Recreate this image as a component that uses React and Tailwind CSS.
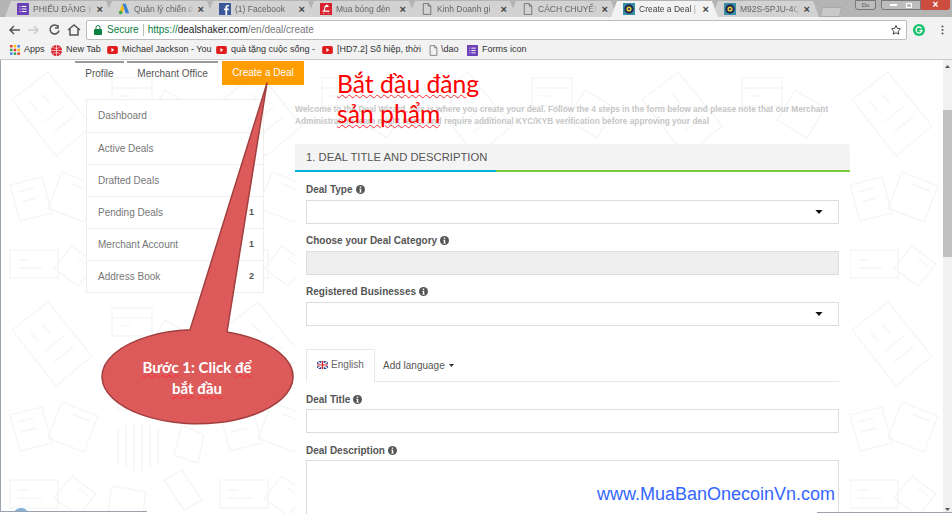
import React from 'react';

const tabs = [
  { label: 'PHIẾU ĐĂNG K', icon: 'forms' },
  { label: 'Quản lý chiến d', icon: 'ads' },
  { label: '(1) Facebook', icon: 'fb' },
  { label: 'Mua bóng đèn', icon: 'shop' },
  { label: 'Kinh Doanh gi', icon: 'doc' },
  { label: 'CÁCH CHUYỂN', icon: 'doc' },
  { label: 'Create a Deal |', icon: 'deal', active: true },
  { label: 'M92S-5PJU-4Q', icon: 'deal' },
];

const sideItems = [
  { label: 'Dashboard' },
  { label: 'Active Deals' },
  { label: 'Drafted Deals' },
  { label: 'Pending Deals', count: 1 },
  { label: 'Merchant Account', count: 1 },
  { label: 'Address Book', count: 2 },
];

const TabIcon = ({ type }) => {
  if (type === 'forms') return (
    <svg width="12" height="12" viewBox="0 0 14 14"><rect width="14" height="14" rx="1" fill="#6b3fb5" /><path d="M3 4h1M3 7h1M3 10h1M5.500 4H11M5.500 7H11M5.500 10H11" stroke="#fff" strokeWidth="1.200" /></svg>
  );
  if (type === 'ads') return (
    <svg width="12" height="12" viewBox="0 0 14 14"><path d="M5 1h4l4 11H9z" fill="#3b82d6" /><path d="M5 1 1 12h4l2-6z" fill="#f2bc1a" /><circle cx="3" cy="11" r="2" fill="#34a853" /></svg>
  );
  if (type === 'fb') return (
    <svg width="12" height="12" viewBox="0 0 14 14"><rect width="14" height="14" fill="#3b5998" /><path d="M9.500 14V8.500h1.700l.3-2H9.500V5.200c0-.6.2-1 1-1h1V2.400c-.3 0-.9-.1-1.500-.1C8.600 2.300 7.500 3.200 7.500 4.900v1.600H6v2h1.500V14z" fill="#fff" /></svg>
  );
  if (type === 'shop') return (
    <svg width="12" height="12" viewBox="0 0 14 14"><rect width="14" height="14" fill="#d8232f" /><path d="M3 9.500h8M4 12h1M9 12h1M5 9l1-5h3M7 2l3 2" stroke="#fff" strokeWidth="1.300" fill="none" /></svg>
  );
  if (type === 'deal') return (
    <svg width="12" height="12" viewBox="0 0 14 14"><rect width="14" height="14" fill="#3a8fa8" /><circle cx="7" cy="7" r="5.500" fill="#23264f" /><circle cx="7" cy="7" r="3" fill="#e4cf3a" /><circle cx="7" cy="7" r="1.300" fill="#23264f" /></svg>
  );
  return (
    <svg width="10" height="12" viewBox="0 0 12 14" fill="none" stroke="#666" strokeWidth="1"><path d="M1.500.5h6l3 3v10h-9zM7.500.500v3h3" /></svg>
  );
};

const YouTubeIcon = () => (
  <svg width="11" height="8" viewBox="0 0 12 9" className="shrink-0"><rect width="12" height="9" rx="2" fill="#e01b1b" /><path d="M4.800 2.300 8 4.500 4.800 6.700z" fill="#fff" /></svg>
);

const InfoIcon = () => (
  <svg width="9" height="9" viewBox="0 0 10 10" className="ml-[3px] inline-block"><circle cx="5" cy="5" r="5" fill="#555" /><rect x="4.200" y="1.700" width="1.600" height="1.500" fill="#fff" /><path d="M3.500 4.200h2.300v3.200h.8v.9H3.500v-.9h.8V5.100h-.8z" fill="#fff" /></svg>
);

const Caret = () => (
  <svg width="8" height="4" viewBox="0 0 9 5"><path d="M0 0h9L4.500 5z" fill="#111" /></svg>
);

const FieldLabel = ({ children, className = '' }) => (
  <div className={`flex items-center h-[12px] text-[10px] font-bold text-[#555] ${className}`}>
    {children}
    <InfoIcon />
  </div>
);

const SelectBox = ({ disabled }) => (
  <div className={`mt-[5px] h-[24px] border border-[#ddd] flex items-center justify-end pr-[15px] ${disabled ? 'bg-[#eeeeee]' : 'bg-white'}`}>
    {!disabled && <Caret />}
  </div>
);

// faint line drawings behind the page
const PagePattern = () => (
  <svg className="absolute inset-0 w-full h-full" xmlns="http://www.w3.org/2000/svg">
    <defs>
      <pattern id="doodle" width="210" height="230" patternUnits="userSpaceOnUse">
        <g fill="none" stroke="#f6f6f6" strokeWidth="1.500">
          <path d="M12 40 48 12 92 66 56 96z" />
          <path d="M30 42l8 9M42 34l8 9M44 62l20-16M54 72l20-16" />
          <path d="M112 18h40v28h-40zM112 28h40M120 36h10" />
          <path d="M165 30l30 18-18 30-30-18z" />
          <path d="M10 125l32-8 10 36-32 8zM18 132l16-4M21 142l16-4" />
          <path d="M62 112l36 14-14 36-36-14zM72 124l18 7" />
          <path d="M118 90h52v30h-52z" />
          <circle cx="144" cy="105" r="9" />
          <path d="M125 97h3M160 113h3" />
          <path d="M118 138v38M126 136v42M134 134v46M142 134v46M150 136v42M158 138v38" />
          <path d="M182 135l22 10-6 28-24-8z" />
          <path d="M10 190h48v28H10zM18 200h10M18 208h24" />
          <path d="M72 186l24 18-18 22-24-18zM78 198l10 8" />
          <path d="M112 196l34 6-4 24-34-6z" />
          <path d="M164 190l18-10 20 30-18 10z" />
        </g>
      </pattern>
    </defs>
    <rect width="100%" height="100%" fill="url(#doodle)" />
  </svg>
);

const Callout = () => (
  <svg className="absolute left-0 top-0" width="320" height="430" viewBox="0 0 320 430">
    <path d="M267 23 227 272A95.500 47 0 1 1 190 269.850Z" fill="#dc5a5a" stroke="#a23f3f" strokeWidth="1.500" strokeLinejoin="round" />
  </svg>
);

const Squiggle = ({ children }) => (
  <span className="underline decoration-wavy decoration-red-500 decoration-1">{children}</span>
);

export default function App() {
  return (
    <div className="relative w-[952px] h-[514px] overflow-hidden bg-white font-['Liberation_Sans',sans-serif]">
      {/* tab strip */}
      <div className="h-[17px] bg-[#b4b4b4] flex items-end pl-[5px] text-[8.500px] text-[#666]">
        {tabs.map((tab, idx) => (
          <div
            key={idx}
            className={`relative w-[107px] -mr-[6px] h-[16px] flex items-center pl-[12px] pr-[9px] [clip-path:polygon(6px_0,calc(100%-6px)_0,100%_100%,0_100%)] ${tab.active ? 'bg-[#f2f2f2] z-10 text-[#444]' : 'bg-[#d2d2d2]'}`}
          >
            <span className="w-[12px] flex justify-center"><TabIcon type={tab.icon} /></span>
            <span className="ml-[4px] mr-[5px] flex-1 overflow-hidden whitespace-nowrap [mask-image:linear-gradient(to_right,black_88%,transparent)]">{tab.label}</span>
            <span className="text-[#444] text-[11px] font-bold leading-none">×</span>
          </div>
        ))}
        <div className="ml-[8px] w-[20px] h-[10px] bg-[#c9c9c9] border border-[#a8a8a8] -skew-x-12" />
        <div className="ml-auto flex self-start h-[10px]">
          <div className="w-[21px] h-[10px] mr-[5px] rounded-b-[3px] border border-[#777] bg-[#bdbdbd] text-[6px] text-center leading-[8px] text-[#555]">Du</div>
          <div className="w-[40px] rounded-bl-[3px] border border-[#777] bg-[#bdbdbd] flex items-center justify-center gap-[9px]">
            <div className="w-[7px] h-[2px] bg-white" />
            <div className="w-[6px] h-[5px] border border-white" />
          </div>
          <div className="w-[29px] rounded-br-[3px] bg-[#cc4d3f] text-white text-[10px] font-bold text-center leading-[9px] mr-[2px]">×</div>
        </div>
      </div>

      {/* address bar */}
      <div className="h-[24px] bg-[#f2f2f2] flex items-center pt-[1px]">
        <svg width="74" height="14" viewBox="0 0 74 14" className="ml-[8px]" fill="none" strokeWidth="1.500">
          <path d="M12 7H2M6 3 2 7l4 4" stroke="#555" />
          <path d="M36 7H26M32 3l4 4-4 4" stroke="#ccc" transform="translate(-6 0)" />
          <path d="M58 3.500a4.500 4.500 0 1 0 1 4" stroke="#555" transform="translate(-8 0)" />
          <path d="M58 2v3h-3" stroke="#555" transform="translate(-8 0)" />
          <path d="M66 7l6-5 6 5M68 6v6h8V6" stroke="#555" transform="translate(-6 0)" />
        </svg>
        <div className="ml-[4px] w-[821px] h-[20px] bg-white border border-[#bcbcbc] rounded-[2px] flex items-center pl-[7px] text-[10px] whitespace-nowrap">
          <svg width="8" height="10" viewBox="0 0 8 10"><path d="M2 4V2.500a2 2 0 0 1 4 0V4" fill="none" stroke="#0b8043" /><rect y="4" width="8" height="6" rx="1" fill="#0b8043" /></svg>
          <span className="ml-[5px] text-[#0b8043]">Secure</span>
          <span className="mx-[4px] w-px h-[12px] bg-[#bbb]" />
          <span className="text-[#0b8043]">https://</span>
          <span className="text-[#222]">dealshaker.com</span>
          <span className="text-[#777]">/en/deal/create</span>
          <svg width="12" height="12" viewBox="0 0 24 24" fill="none" stroke="#444" strokeWidth="2" className="ml-auto mr-[4px]"><path d="m12 3 2.800 5.800 6.200.9-4.500 4.400 1 6.300-5.500-3-5.500 3 1-6.300L3 9.700l6.200-.9z" /></svg>
        </div>
        <svg width="12" height="12" viewBox="0 0 12 12" className="ml-[6px]"><circle cx="6" cy="6" r="6" fill="#15c26b" /><path d="M8.500 4.300A3 3 0 1 0 9 6.500H6.500" fill="none" stroke="#fff" strokeWidth="1.300" /></svg>
        <svg width="3" height="10" viewBox="0 0 3 10" className="ml-[16px]"><circle cx="1.500" cy="1.500" r="1" fill="#555" /><circle cx="1.500" cy="5" r="1" fill="#555" /><circle cx="1.500" cy="8.500" r="1" fill="#555" /></svg>
      </div>

      {/* bookmarks bar */}
      <div className="h-[19px] bg-[#f2f2f2] border-b border-[#ccc] flex items-center pl-[10px] text-[9px] text-[#333] whitespace-nowrap">
        <svg width="10" height="10" viewBox="0 0 10 10" className="shrink-0">
          <rect width="2.500" height="2.500" fill="#e53935" /><rect x="3.700" width="2.500" height="2.500" fill="#fbbc05" /><rect x="7.400" width="2.500" height="2.500" fill="#4285f4" />
          <rect y="3.700" width="2.500" height="2.500" fill="#34a853" /><rect x="3.700" y="3.700" width="2.500" height="2.500" fill="#e53935" /><rect x="7.400" y="3.700" width="2.500" height="2.500" fill="#fbbc05" />
          <rect y="7.400" width="2.500" height="2.500" fill="#4285f4" /><rect x="3.700" y="7.400" width="2.500" height="2.500" fill="#34a853" /><rect x="7.400" y="7.400" width="2.500" height="2.500" fill="#e53935" />
        </svg>
        <span className="ml-[4px] w-[27px]">Apps</span>
        <svg width="11" height="11" viewBox="0 0 12 12" className="shrink-0"><circle cx="6" cy="6" r="6" fill="#d8232f" /><path d="M0 6h12M6 0v12M2 2.500c2.500 1.500 5.500 1.500 8 0M2 9.500c2.500-1.500 5.500-1.500 8 0" stroke="#fff" strokeWidth=".7" fill="none" /></svg>
        <span className="ml-[4px] w-[41px]">New Tab</span>
        <YouTubeIcon />
        <span className="ml-[4px] w-[94px]">Michael Jackson - You</span>
        <YouTubeIcon />
        <span className="ml-[4px] w-[91px]">quà tặng cuộc sống -</span>
        <YouTubeIcon />
        <span className="ml-[4px] w-[92px]">[HD7.2] Số hiệp, thời</span>
        <svg width="9" height="11" viewBox="0 0 12 14" fill="none" stroke="#666" strokeWidth="1" className="shrink-0"><path d="M1.500.5h6l3 3v10h-9zM7.500.500v3h3" /></svg>
        <span className="ml-[3px] w-[26px]">\dao</span>
        <svg width="11" height="11" viewBox="0 0 14 14" className="shrink-0"><rect width="14" height="14" rx="1" fill="#6b3fb5" /><path d="M3 4h1M3 7h1M3 10h1M5.500 4H11M5.500 7H11M5.500 10H11" stroke="#fff" strokeWidth="1.200" /></svg>
        <span className="ml-[4px]">Forms icon</span>
      </div>

      {/* page */}
      <div className="relative h-[454px] flex">
        <PagePattern />
        <div className="relative w-[943px] flex border-l border-[#9aa3ab]">
          {/* left column */}
          <div className="w-[294px] shrink-0">
            <div className="flex items-start pl-[74px] pt-[1px] text-[10px] text-[#555]">
              <div className="w-[49px] shrink-0 h-[24px] border-t-2 border-[#999] text-center leading-[22px]">Profile</div>
              <div className="ml-[3px] w-[91px] shrink-0 h-[24px] border-t-2 border-[#999] text-center leading-[22px]">Merchant Office</div>
              <div className="ml-[4px] w-[82px] shrink-0 h-[24px] bg-[#ff9c00] text-white text-center leading-[24px]">Create a Deal</div>
            </div>
            <div className="ml-[85px] mt-[14px] w-[178px] border border-[#eee] bg-white">
              {sideItems.map((item, idx) => (
                <div key={idx} className={`h-[32px] flex items-center justify-between pl-[11px] pr-[9px] text-[10px] text-[#777] ${idx ? 'border-t border-[#f0f0f0]' : 'pb-[2px]'}`}>
                  <span>{item.label}</span>
                  {item.count && <span className="font-bold text-[#555] text-[9px]">{item.count}</span>}
                </div>
              ))}
            </div>
          </div>

          {/* form column */}
          <div className="w-[555px] pt-[43px]">
            <p className="text-[8.300px] leading-[12px] font-bold text-[#c6c6c6] w-[540px] h-[24px]">
              Welcome to the Deal Wizard, this is where you create your deal. Follow the 4 steps in the form below and please note that our Merchant Administration team might reject and require additional KYC/KYB verification before approving your deal
            </p>
            <div className="mt-[17px] h-[26px] bg-[#f4f4f4] rounded-t-[2px] pl-[11px] flex items-center text-[11.250px] text-[#555]">
              1. DEAL TITLE AND DESCRIPTION
            </div>
            <div className="h-[2px] flex">
              <div className="w-[201px] bg-[#00b4d8]" />
              <div className="flex-1 bg-[#77cc3a]" />
            </div>
            <div className="bg-white px-[11px] pt-[11px] h-[342px]">
              <FieldLabel>Deal Type</FieldLabel>
              <SelectBox />
              <FieldLabel className="mt-[10px]">Choose your Deal Category</FieldLabel>
              <SelectBox disabled />
              <FieldLabel className="mt-[10px]">Registered Businesses</FieldLabel>
              <SelectBox />

              <div className="mt-[23px] h-[33px] border-b border-[#e8e8e8] flex text-[10px] text-[#555]">
                <div className="w-[69px] h-[33px] border border-b-0 border-[#e8e8e8] bg-white flex items-center justify-center gap-[3px] text-[#666] pb-[3px]">
                  <svg width="11" height="8" viewBox="0 0 11 8"><rect width="11" height="8" fill="#2b3f87" /><path d="M0 0l11 8M11 0 0 8" stroke="#fff" strokeWidth="1.200" /><path d="M5.500 0v8M0 4h11" stroke="#fff" strokeWidth="2.400" /><path d="M5.500 0v8M0 4h11" stroke="#d8232f" strokeWidth="1.200" /></svg>
                  English
                </div>
                <div className="ml-[8px] flex items-center">
                  Add language
                  <svg width="5" height="3" viewBox="0 0 5 3" className="ml-[4px]"><path d="M0 0h5L2.500 3z" fill="#333" /></svg>
                </div>
              </div>

              <FieldLabel className="mt-[11px]">Deal Title</FieldLabel>
              <div className="mt-[4px] h-[24px] border border-[#ddd]" />
              <FieldLabel className="mt-[11px]">Deal Description</FieldLabel>
              <div className="mt-[4px] h-[60px] border border-[#ddd]" />
            </div>
          </div>
        </div>

        {/* scrollbar */}
        <div className="relative ml-auto w-[9px] bg-[#f1f1f1] flex flex-col items-center">
          <svg width="7" height="8" viewBox="0 0 7 8" className="mt-[3px] shrink-0"><path d="M3.500 2 6 5H1z" fill="#555" /></svg>
          <div className="mt-[39px] w-full h-[147px] bg-[#c1c1c1]" />
          <svg width="7" height="8" viewBox="0 0 7 8" className="mt-auto mb-[1px] shrink-0"><path d="M1 3h5L3.500 6z" fill="#555" /></svg>
        </div>

        {/* annotations on top of the screenshot */}
        <Callout />
        <div className="absolute left-[102px] top-[297px] w-[190px] text-center text-[15px] leading-[21px] font-bold text-white font-['Lato','Noto_Sans',sans-serif]">
          <Squiggle>Bước</Squiggle> 1: Click <Squiggle>để</Squiggle>
          <br />
          <Squiggle>bắt</Squiggle> <Squiggle>đầu</Squiggle>
        </div>
        <div className="absolute left-[337px] top-[9px] text-[24.700px] leading-[30px] text-[#ff0000] font-['Lato','Noto_Sans',sans-serif] whitespace-nowrap">
          <Squiggle>Bắt đầu đăng</Squiggle>
          <br />
          <Squiggle>sản phẩm</Squiggle>
        </div>
        <div className="absolute left-[597px] top-[423px] text-[18px] leading-[22px] text-[#3366ff] whitespace-nowrap">www.MuaBanOnecoinVn.com</div>
        <div className="absolute left-[12px] top-[448px] w-[18px] h-[18px] rounded-full bg-[#7fb0d8]" />
        <div className="absolute left-0 top-[451px] w-[147px] h-[3px] bg-white border-t border-[#9aa3ab]" />
        <div className="absolute right-0 top-[452px] w-[135px] h-[2px] bg-white border-t border-[#9aa3ab]" />
      </div>
    </div>
  );
}
